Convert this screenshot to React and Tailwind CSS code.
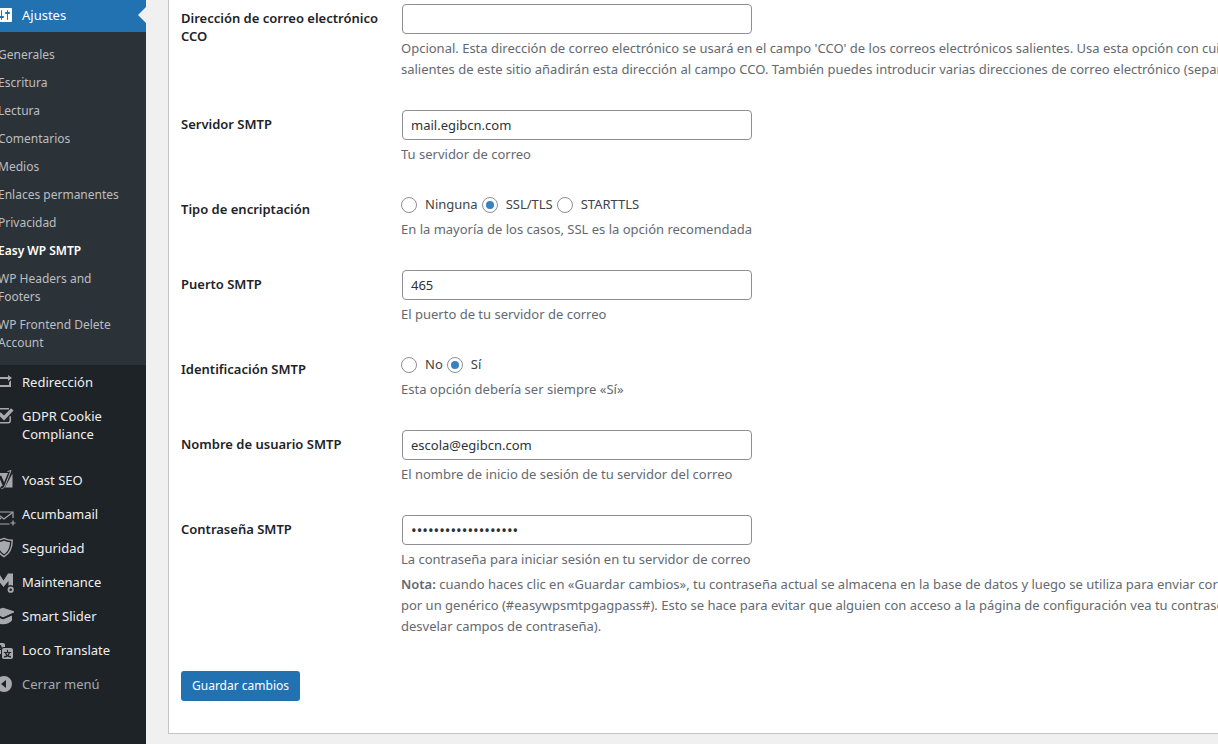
import React from 'react';

const icons = {
    settings: (
        <path
            fillRule="evenodd"
            d="M18 16V4c0-.55-.45-1-1-1H3c-.55 0-1 .45-1 1v12c0 .55.45 1 1 1h14c.55 0 1-.45 1-1zM8 11h1c.55 0 1 .45 1 1s-.45 1-1 1H8v1.500c0 .28-.22.5-.5.5s-.5-.22-.5-.5V13H6c-.55 0-1-.45-1-1s.45-1 1-1h1V5.500c0-.28.22-.5.5-.5s.5.22.5.5V11zm5-2h-1c-.55 0-1-.45-1-1s.45-1 1-1h1V5.500c0-.28.22-.5.5-.5s.5.22.5.5V7h1c.55 0 1 .45 1 1s-.45 1-1 1h-1v5.500c0 .28-.22.5-.5.5s-.5-.22-.5-.5V9z"
        />
    ),
    repeat: <path d="M5 7v3l-2 1.500V5h11V3l4 3.010L14 9V7H5zm10 6v-3l2-1.500V15H6v2l-4-3.010L6 11v2h9z" />,
    check: (
        <g fill="none" stroke="currentColor">
            <path strokeWidth="1.500" d="M15 2.800H4a2 2 0 0 0-2 2v10a2 2 0 0 0 2 2h10.200a2 2 0 0 0 2-2v-4.500" />
            <path strokeWidth="3.400" d="M5.500 7.500 10 12l8.300-8.600" />
        </g>
    ),
    yoast: (
        <>
            <path d="M3 3h12.500L10 17.500H3a2 2 0 0 1-2-2V5a2 2 0 0 1 2-2z" />
            <path d="M18.500 3.500v14h-7.500z" />
            <path fill="none" stroke="#1d2327" strokeWidth="2.600" d="m6 6 3.600 8.500M16.500.500 10.400 15c-.7 1.800-1.800 2.800-3.600 2.800" />
            <path fill="none" stroke="currentColor" strokeWidth="1" d="m13.500 1.500 3.500-.9-6.200 15.600c-.8 1.700-1.800 2.500-3.400 2.500" />
        </>
    ),
    mail: (
        <g fill="none" stroke="currentColor" strokeWidth="1.200">
            <path d="M19 14V8H1v12h14.500" />
            <path d="m1.500 8.500 8.500 6.500 8.500-6.500M1.500 19.500 7 14" />
            <path d="M19 16.500v5M16.500 19h5" />
        </g>
    ),
    shield: (
        <>
            <path fill="none" stroke="currentColor" strokeWidth="1.400" d="M10 .3c3 1.300 5.500 1.900 8.200 1.900 0 7-1.700 12.800-8.200 16.500C3.500 15 1.800 9.200 1.800 2.200 4.500 2.200 7 1.600 10 .3z" />
            <path d="M10 2.700c2 .9 3.900 1.400 6 1.500-.3 5.300-1.900 9.300-6 12.100-4.100-2.800-5.700-6.800-6-12.100 2.100-.1 4-.6 6-1.500z" />
        </>
    ),
    maintenance: (
        <>
            <path d="M0 17.500v-16h5l4.500 7 4.500-7h5v12.300a4.300 4.300 0 0 0-4.500 0V9l-5 6-5-6v8.500z" />
            <circle cx="16.700" cy="17.700" r="2.200" fill="none" stroke="currentColor" strokeWidth="1.800" />
        </>
    ),
    cap: (
        <>
            <path d="M9 1.800 20 5.200v1.200L9 11.500-2 6.400V5.200z" />
            <path d="M3 10.500 9 13.300l9-3.800v5c-2 2.400-5 3.700-9 3.700s-6-1.300-8-3.300V9.800z" />
            <path fill="none" stroke="#1d2327" strokeWidth="1.400" d="m1 8.700 8 3.700 10-4.500" />
        </>
    ),
    translate: (
        <path
            fillRule="evenodd"
            d="M11 7H9.490c-.63 0-1.250.3-1.590.7L7 5H4.130l-2.390 7h1.690l.74-2H7v4H2c-1.100 0-2-.9-2-2V5c0-1.100.9-2 2-2h7c1.100 0 2 .9 2 2v2zM6.510 9H4.490l1-2.930zM10 8h7c1.100 0 2 .9 2 2v7c0 1.100-.9 2-2 2h-7c-1.100 0-2-.9-2-2v-7c0-1.100.9-2 2-2zm7.250 5v-1.080h-3.170V9.750h-1.160v2.170H9.750V13h1.280c.11.85.56 1.850 1.280 2.620-.87.36-1.890.62-2.310.62-.01.02.22.97.2 1.460.84 0 2.210-.5 3.280-1.150 1.090.65 2.480 1.150 3.340 1.150-.02-.49.2-1.440.2-1.460-.43 0-1.490-.27-2.380-.63.7-.77 1.140-1.770 1.250-2.610h1.360zm-3.810 1.930c-.5-.46-.85-1.130-1.010-1.930h2.090c-.17.8-.51 1.470-1 1.930l-.04.03s-.03-.02-.04-.03z"
        />
    ),
    collapse: <path fillRule="evenodd" d="M10 2a8 8 0 1 1 0 16 8 8 0 0 1 0-16zm2 4-5 4 5 4z" />,
};

const Icon = ({ name }) => (
    <svg viewBox="0 0 20 20" className="-my-px w-5 h-5 shrink-0 overflow-visible" fill="currentColor" aria-hidden="true">
        {icons[name]}
    </svg>
);

const submenu = [
    'Generales',
    'Escritura',
    'Lectura',
    'Comentarios',
    'Medios',
    'Enlaces permanentes',
    'Privacidad',
    'Easy WP SMTP',
    'WP Headers and Footers',
    'WP Frontend Delete Account',
];

const menu = [
    { icon: 'repeat', label: 'Redirección' },
    { icon: 'check', label: 'GDPR Cookie Compliance' },
    { icon: 'yoast', label: 'Yoast SEO', group: true },
    { icon: 'mail', label: 'Acumbamail' },
    { icon: 'shield', label: 'Seguridad' },
    { icon: 'maintenance', label: 'Maintenance' },
    { icon: 'cap', label: 'Smart Slider' },
    { icon: 'translate', label: 'Loco Translate' },
];

const Sidebar = () => (
    <nav className="w-[146px] shrink-0 overflow-hidden bg-[#1d2327] text-[13px] leading-[18px]">
        <div className="-ml-[14px] -mt-[2px]">
            <a href="#ajustes" className="relative flex gap-2 bg-[#2271b1] pl-2 py-2 text-white">
                <Icon name="settings" />
                <span>Ajustes</span>
                <span className="absolute right-0 top-1/2 -translate-y-1/2 border-8 border-transparent border-r-[#f0f0f1]" />
            </a>
            <ul className="bg-[#2c3338] pt-[9px] pb-2 text-[12px]">
                {submenu.map((item) => (
                    <li key={item}>
                        <a
                            href="#submenu"
                            className={`block px-3 py-[5px] ${item === 'Easy WP SMTP' ? 'font-semibold text-white' : 'text-[#bcbec1]'}`}
                        >
                            {item}
                        </a>
                    </li>
                ))}
            </ul>
            <ul>
                {menu.map(({ icon, label, group }) => (
                    <li key={label} className={group ? 'mt-3' : ''}>
                        <a href="#menu" className="flex gap-2 pl-2 pr-5 py-2 text-[#f0f0f1]">
                            <span className="flex h-[18px] text-[#a7aaad]">
                                <Icon name={icon} />
                            </span>
                            <span>{label}</span>
                        </a>
                    </li>
                ))}
            </ul>
            <button type="button" className="flex gap-2 pl-2 py-2 text-[#a7aaad]">
                <Icon name="collapse" />
                <span>Cerrar menú</span>
            </button>
        </div>
    </nav>
);

const Row = ({ label, id, children }) => (
    <tr className="align-top">
        <th scope="row" className="w-[220px] py-5 pr-4 text-left text-[13px] leading-[18px] font-semibold text-[#1d2327]">
            {id ? <label htmlFor={id}>{label}</label> : label}
        </th>
        <td className="py-[15px]">{children}</td>
    </tr>
);

const TextField = ({ id, type = 'text', value = '' }) => (
    <input
        id={id}
        type={type}
        defaultValue={value}
        className={`mx-px block h-[30px] w-[350px] rounded-[4px] border border-[#8c8f94] bg-white px-2 text-[#2c3338] ${type === 'password' ? 'text-[15px]' : 'text-[13px]'}`}
    />
);

const Radios = ({ name, legend, options, selected }) => (
    <div role="radiogroup" aria-label={legend} className="flex h-5 items-center gap-1">
        {options.map((option) => (
            <label key={option} className="flex items-center gap-2">
                <input
                    type="radio"
                    name={name}
                    defaultChecked={option === selected}
                    className="h-4 w-4 appearance-none rounded-full border border-[#8c8f94] bg-white bg-clip-content p-[3px] checked:bg-[#3582c4]"
                />
                {option}
            </label>
        ))}
    </div>
);

const Description = ({ children }) => (
    <p className="mt-1 whitespace-nowrap leading-[21px] text-[#646970]">{children}</p>
);

const App = () => {
    return (
        <div className="flex min-h-screen overflow-hidden bg-[#f0f0f1] font-['Noto_Sans','Open_Sans',sans-serif] text-[13px] text-[#3c434a]">
            <Sidebar />
            <main className="min-w-0 flex-1 overflow-hidden pl-[22px]">
                <form className="border-b border-l border-[#c3c4c7] bg-white pb-8 pl-3">
                    <table className="-mt-[11px] w-full table-fixed border-collapse">
                        <tbody>
                            <Row label="Dirección de correo electrónico CCO" id="bcc">
                                <TextField id="bcc" />
                                <Description>
                                    Opcional. Esta dirección de correo electrónico se usará en el campo 'CCO' de los correos electrónicos salientes. Usa esta opción con cuidado
                                    <br />
                                    salientes de este sitio añadirán esta dirección al campo CCO. También puedes introducir varias direcciones de correo electrónico (separadas
                                </Description>
                            </Row>
                            <Row label="Servidor SMTP" id="host">
                                <TextField id="host" value="mail.egibcn.com" />
                                <Description>Tu servidor de correo</Description>
                            </Row>
                            <Row label="Tipo de encriptación">
                                <Radios name="encryption" legend="Tipo de encriptación" options={['Ninguna', 'SSL/TLS', 'STARTTLS']} selected="SSL/TLS" />
                                <Description>En la mayoría de los casos, SSL es la opción recomendada</Description>
                            </Row>
                            <Row label="Puerto SMTP" id="port">
                                <TextField id="port" value="465" />
                                <Description>El puerto de tu servidor de correo</Description>
                            </Row>
                            <Row label="Identificación SMTP">
                                <Radios name="auth" legend="Identificación SMTP" options={['No', 'Sí']} selected="Sí" />
                                <Description>Esta opción debería ser siempre «Sí»</Description>
                            </Row>
                            <Row label="Nombre de usuario SMTP" id="user">
                                <TextField id="user" value="escola@egibcn.com" />
                                <Description>El nombre de inicio de sesión de tu servidor del correo</Description>
                            </Row>
                            <Row label="Contraseña SMTP" id="password">
                                <TextField id="password" type="password" value="easywpsmtpgagpass##" />
                                <Description>La contraseña para iniciar sesión en tu servidor de correo</Description>
                                <Description>
                                    <strong className="font-semibold">Nota:</strong> cuando haces clic en «Guardar cambios», tu contraseña actual se almacena en la base de datos y luego se utiliza para enviar correos
                                    <br />
                                    por un genérico (#easywpsmtpgagpass#). Esto se hace para evitar que alguien con acceso a la página de configuración vea tu contraseña
                                    <br />
                                    desvelar campos de contraseña).
                                </Description>
                            </Row>
                        </tbody>
                    </table>
                    <button type="button" className="mt-[19px] block h-[30px] rounded-[3px] bg-[#2271b1] px-[11px] text-[12px] text-white">
                        Guardar cambios
                    </button>
                </form>
            </main>
        </div>
    );
};

export default App;
